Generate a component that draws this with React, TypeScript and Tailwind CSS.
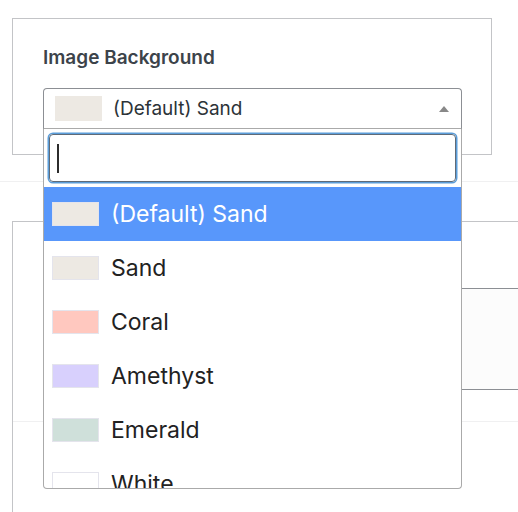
import React from "react"

const options = [
  { name: "(Default) Sand", color: "bg-[#ede9e3]", active: true },
  { name: "Sand", color: "bg-[#ede9e3]" },
  { name: "Coral", color: "bg-[#ffc8bf]" },
  { name: "Amethyst", color: "bg-[#d8d0fd]" },
  { name: "Emerald", color: "bg-[#cfe0da]" },
  { name: "White", color: "bg-white" },
]

export default function App() {
  return (
    <div className="relative min-h-[512px] overflow-hidden bg-white font-['Inter','Liberation_Sans',sans-serif]">
      {/* settings card */}
      <div className="pt-[18px] pl-3">
        <div className="h-[137px] w-[480px] border border-[#c3c4c7] pl-[30px] pr-[29px] pt-[27px]">
          <div className="mb-[18px] text-[19px] font-semibold leading-6 text-[#3c434a]">Image Background</div>
          <div className="relative z-10">
            <div className="flex h-[41px] items-center rounded-t-[4px] border border-[#8c8f94] border-b-[#aaa] pl-[11px] pr-[12px]">
              <span className="h-[25px] w-[47px] bg-[#ede9e3]" />
              <span className="ml-[11px] pt-[2px] text-[19px] text-[#2c3338]">(Default) Sand</span>
              <span className="ml-auto h-0 w-0 border-x-[5px] border-b-[6px] border-x-transparent border-b-[#888]" />
            </div>
            <div className="absolute left-0 right-0 top-full h-[360px] overflow-hidden rounded-b-[4px] border-x border-b border-[#aaa] bg-white">
              <div className="p-[5px]">
                <div className="flex h-[48px] items-center rounded-[4px] border border-[#5f6b78] pl-[7px] shadow-[0_0_0_1.5px_#5b9dd9]">
                  <span className="h-[29px] w-[2px] bg-[#2c2c2c]" />
                </div>
              </div>
              {options.map((o) => (
                <div
                  key={o.name}
                  className={`flex h-[54px] items-center gap-3 pl-[8px] ${o.active ? "bg-[#5897fb] text-white" : "text-[#222]"}`}
                >
                  <span className={`h-[24px] w-[47px] border border-[#e4e4ec] ${o.color}`} />
                  <span className="text-[23px]">{o.name}</span>
                </div>
              ))}
            </div>
          </div>
        </div>
      </div>

      <div className="mt-[26px] border-t border-[#f0f0f1]" />

      {/* next card, partly hidden under the open dropdown */}
      <div className="ml-3 mt-[39px] w-[540px] border-l border-t border-[#c3c4c7] pt-[66px]">
        <div className="ml-[31px] h-[102px] border-y border-[#8c8f94] bg-[#fcfcfc]" />
        <div className="mt-[31px] h-[100px] border-t border-[#f0f0f1]" />
      </div>
    </div>
  )
}
